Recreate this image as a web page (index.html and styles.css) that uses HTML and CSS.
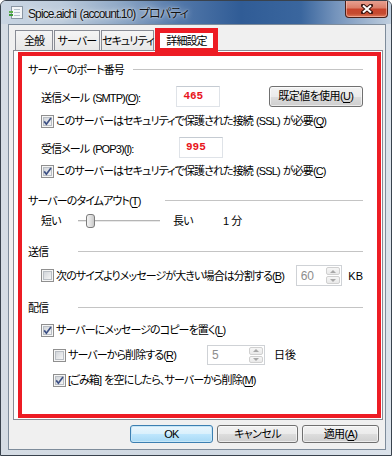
FILE: index.html
```html
<!DOCTYPE html>
<html>
<head>
    <title>Spice.aichi (account.10) プロパティ</title>
    <link rel="stylesheet" href="styles.css">
</head>
<body>
    <svg class="defs">
        <defs>
            <linearGradient id="cb-fill" x1="0" y1="0" x2="1" y2="1">
                <stop offset="0" stop-color="#cfd3d8"/>
                <stop offset="1" stop-color="#f7f7f7"/>
            </linearGradient>
            <symbol id="cb" viewBox="0 0 13 13">
                <rect x="0.5" y="0.5" width="12" height="12" fill="#f6f6f6" stroke="#8f8f8f"/>
                <rect x="2.5" y="2.5" width="8" height="8" fill="url(#cb-fill)" stroke="#b9bec4"/>
            </symbol>
            <symbol id="cb-on" viewBox="0 0 13 13">
                <use href="#cb"/>
                <path d="M3.2 6.4 L5.4 9.2 L10 3" fill="none" stroke="#3e5185" stroke-width="1.7"/>
            </symbol>
        </defs>
    </svg>

    <div class="window">
        <div class="titlebar">
            <svg class="app-icon" width="16" height="16" viewBox="0 0 16 16">
                <rect x="3.5" y="2.5" width="11" height="12" fill="#f4f6f8" stroke="#8a96a3"/>
                <line x1="6" y1="5.5" x2="12" y2="5.5" stroke="#b6c0ca"/>
                <line x1="6" y1="8.5" x2="12" y2="8.5" stroke="#b6c0ca"/>
                <line x1="6" y1="11.5" x2="12" y2="11.5" stroke="#b6c0ca"/>
                <rect x="1" y="7" width="4" height="2" fill="#5bb04a"/>
                <rect x="1" y="10" width="4" height="2" fill="#3f9a3a"/>
            </svg>
            <span class="title">Spice.aichi (account.10) プロパティ</span>
            <div class="close-btn">
                <svg width="12" height="10" viewBox="0 0 12 10">
                    <path d="M2 1.5 L10 8.5 M10 1.5 L2 8.5" stroke="#3b1510" stroke-width="4" stroke-linecap="square"/>
                    <path d="M2 1.5 L10 8.5 M10 1.5 L2 8.5" stroke="#fff" stroke-width="2"/>
                </svg>
            </div>
        </div>

        <div class="frame">
            <div class="client">
                <div class="tabs">
                    <div class="tab tab-general">全般</div>
                    <div class="tab tab-server">サーバー</div>
                    <div class="tab tab-security">セキュリティ</div>
                    <div class="tab selected">詳細設定</div>
                </div>

                <div class="panel">
                    <div class="highlight">
                        <div class="group group-ports">
                            <span class="group-label">サーバーのポート番号</span>
                            <div class="rule"></div>
                        </div>

                        <div class="row row-smtp">
                            <span class="field-label">送信メール (SMTP)(<u>O</u>):</span>
                            <div class="port">465</div>
                            <button class="btn btn-default-ports">既定値を使用(<u>U</u>)</button>
                        </div>
                        <div class="check check-ssl1">
                            <svg class="cb"><use href="#cb-on"/></svg>
                            <span>このサーバーはセキュリティで保護された接続 (SSL) が必要(<u>Q</u>)</span>
                        </div>

                        <div class="row row-pop">
                            <span class="field-label">受信メール (POP3)(<u>I</u>):</span>
                            <div class="port">995</div>
                        </div>
                        <div class="check check-ssl2">
                            <svg class="cb"><use href="#cb-on"/></svg>
                            <span>このサーバーはセキュリティで保護された接続 (SSL) が必要(<u>C</u>)</span>
                        </div>

                        <div class="group group-timeout">
                            <span class="group-label">サーバーのタイムアウト(<u>T</u>)</span>
                            <div class="rule"></div>
                        </div>
                        <div class="slider-row">
                            <span class="slider-short">短い</span>
                            <div class="track">
                                <div class="thumb"></div>
                            </div>
                            <span class="slider-long">長い</span>
                            <span>1 分</span>
                        </div>

                        <div class="group group-send">
                            <span class="group-label">送信</span>
                            <div class="rule"></div>
                        </div>
                        <div class="check check-split">
                            <svg class="cb"><use href="#cb"/></svg>
                            <span class="check-text split-text">次のサイズよりメッセージが大きい場合は分割する(<u>B</u>)</span>
                            <div class="spin spin-size">
                                <span class="spin-value">60</span>
                                <div class="spin-btns">
                                    <span class="spin-btn"><i class="arrow-up"></i></span>
                                    <span class="spin-btn"><i class="arrow-down"></i></span>
                                </div>
                            </div>
                            <span class="unit">KB</span>
                        </div>

                        <div class="group group-deliver">
                            <span class="group-label">配信</span>
                            <div class="rule"></div>
                        </div>
                        <div class="check check-copy">
                            <svg class="cb"><use href="#cb-on"/></svg>
                            <span>サーバーにメッセージのコピーを置く(<u>L</u>)</span>
                        </div>
                        <div class="check sub check-remove">
                            <svg class="cb"><use href="#cb"/></svg>
                            <span class="check-text remove-text">サーバーから削除する(<u>R</u>)</span>
                            <div class="spin spin-days">
                                <span class="spin-value">5</span>
                                <div class="spin-btns">
                                    <span class="spin-btn"><i class="arrow-up"></i></span>
                                    <span class="spin-btn"><i class="arrow-down"></i></span>
                                </div>
                            </div>
                            <span class="unit">日後</span>
                        </div>
                        <div class="check sub check-trash">
                            <svg class="cb"><use href="#cb-on"/></svg>
                            <span>[ごみ箱] を空にしたら、サーバーから削除(<u>M</u>)</span>
                        </div>
                    </div>
                </div>

                <div class="buttons">
                    <button class="btn btn-ok">OK</button>
                    <button class="btn btn-cancel">キャンセル</button>
                    <button class="btn btn-apply">適用(<u>A</u>)</button>
                </div>
            </div>
        </div>
    </div>
</body>
</html>
```

FILE: styles.css
```css
body {
    margin: 0;
    font-family: "Liberation Sans", "Noto Sans CJK JP", sans-serif;
    font-size: 11px;
    letter-spacing: -0.9px;
    word-spacing: 1px;
    font-feature-settings: "palt" 1;
    color: #000;
    background: #fff;
}

.defs {
    position: absolute;
    width: 0;
    height: 0;
}

u {
    text-decoration-thickness: 1px;
    text-underline-offset: 2px;
}

/* window frame */

.window {
    width: 392px;
    height: 456px;
    box-sizing: border-box;
    border: 1px solid #39424d;
    border-radius: 6px 6px 0 0;
    background: linear-gradient(to right, #d5dce4, #cfd8e2 50%, #dbe2ea);
    display: flex;
    flex-direction: column;
    overflow: hidden;
}

.titlebar {
    height: 23px;
    flex: none;
    display: flex;
    align-items: center;
    padding-left: 7px;
    background: linear-gradient(to right, #cad6e3 0px, #bccbdb 60px, #92abc8 115px, #5479aa 175px, #305c96 240px, #3a669e 300px, #7594bc 335px, #bfcede 390px);
}

.app-icon {
    flex: none;
    margin-top: -2px;
}

.title {
    margin-left: 4px;
    font-size: 12px;
    letter-spacing: -0.9px;
    word-spacing: 1px;
    color: #111;
    text-shadow: 0 0 6px rgba(255, 255, 255, 0.9), 0 0 2px rgba(255, 255, 255, 0.7);
    white-space: nowrap;
}

.close-btn {
    margin-left: auto;
    margin-right: 3px;
    align-self: flex-start;
    margin-top: -1px;
    width: 43px;
    height: 18px;
    box-sizing: border-box;
    border: 1px solid #4a1f18;
    border-top: none;
    border-radius: 0 0 4px 4px;
    background: linear-gradient(#e8a496 0%, #dd7f6a 45%, #c8452d 55%, #c54b30 80%, #e07b5c 100%);
    box-shadow: inset 0 0 0 1px rgba(255, 210, 200, 0.5);
    display: flex;
    align-items: center;
    justify-content: center;
}

.frame {
    flex: 1;
    padding: 0 5px 5px 7px;
    display: flex;
}

.client {
    width: 378px;
    height: 426px;
    box-sizing: border-box;
    border: 1px solid #7e8c9b;
    background: #f0f0f0;
    display: flex;
    flex-direction: column;
}

/* tabs */

.tabs {
    height: 24px;
    margin-top: 1px;
    padding-left: 6px;
    display: flex;
    align-items: flex-start;
    flex: none;
}

.tab {
    height: 20px;
    margin-top: 4px;
    margin-right: 1px;
    box-sizing: border-box;
    border: 1px solid #898c95;
    border-bottom: none;
    background: linear-gradient(#f5f5f5, #e7e7e7);
    line-height: 20px;
    text-align: center;
    white-space: nowrap;
}

.tab-general {
    width: 38px;
}

.tab-server {
    width: 46px;
}

.tab-security {
    width: 53px;
}

.tab.selected {
    position: relative;
    z-index: 1;
    width: 63px;
    height: 24px;
    margin-top: 2px;
    border: 5px solid #ed1c24;
    border-bottom-width: 4px;
    background: #fff;
    line-height: 16px;
}

/* tab page */

.panel {
    width: 370px;
    height: 370px;
    margin-left: 4px;
    box-sizing: border-box;
    border: 1px solid #898c95;
    background: #fff;
    display: flex;
    flex-direction: column;
    flex: none;
}

.highlight {
    flex: 1;
    margin: 1px 1px 1px 4px;
    border: 4px solid #ed1c24;
    padding: 0 14px 0 6px;
    display: flex;
    flex-direction: column;
}

.group {
    height: 16px;
    display: flex;
    align-items: center;
    line-height: 16px;
}

.group-label {
    flex: none;
    white-space: nowrap;
}

.rule {
    flex: 1;
    height: 0;
    border-top: 1px solid #c4c4c4;
    margin-top: -1px;
}

.group-ports {
    margin-top: 6px;
}

.group-ports .group-label {
    width: 105px;
}

.group-timeout {
    margin-top: 14px;
}

.group-timeout .group-label {
    width: 137px;
}

.group-send {
    margin-top: 15px;
}

.group-send .group-label,
.group-deliver .group-label {
    width: 50px;
}

.group-deliver {
    margin-top: 14px;
}

.row {
    height: 21px;
    display: flex;
    align-items: center;
    padding-left: 13px;
}

.row-smtp {
    margin-top: 8px;
}

.row-pop {
    margin-top: 8px;
}

.field-label {
    width: 138px;
    white-space: nowrap;
}

.port {
    width: 44px;
    height: 21px;
    box-sizing: border-box;
    border: 1px solid #dfe3e8;
    border-top-color: #c5cbd2;
    padding-left: 6px;
    font-family: "Liberation Mono", monospace;
    font-weight: bold;
    font-size: 11px;
    letter-spacing: 0;
    line-height: 19px;
    color: #e8141b;
}

.btn {
    height: 21px;
    box-sizing: border-box;
    padding: 0;
    border: 1px solid #707070;
    border-radius: 3px;
    background: linear-gradient(#f2f2f2 0%, #ebebeb 50%, #dddddd 51%, #cfcfcf 100%);
    box-shadow: inset 0 0 0 1px rgba(255, 255, 255, 0.6);
    font-family: inherit;
    font-size: 11px;
    letter-spacing: -0.6px;
    font-feature-settings: "palt" 1;
    color: #000;
    line-height: 17px;
}

.btn-default-ports {
    width: 96px;
    margin-left: 49px;
}

/* check boxes */

.check {
    height: 16px;
    display: flex;
    align-items: center;
    padding-left: 13px;
    line-height: 16px;
    white-space: nowrap;
}

.check.sub {
    padding-left: 25px;
}

.cb {
    width: 13px;
    height: 13px;
    flex: none;
    margin-right: 2px;
}

.check-ssl1 {
    margin-top: 6px;
}

.check-ssl2 {
    margin-top: 5px;
}

.check-split {
    height: 21px;
    margin-top: 5px;
}

.split-text {
    width: 242px;
}

.check-copy {
    margin-top: 6px;
}

.check-remove {
    height: 20px;
    margin-top: 7px;
}

.remove-text {
    width: 139px;
}

.check-trash {
    margin-top: 7px;
}

/* spin boxes */

.spin {
    height: 21px;
    box-sizing: border-box;
    border: 1px solid #cfd2d6;
    background: #fff;
    display: flex;
    align-items: center;
    justify-content: space-between;
    padding: 1px 1px 1px 4px;
}

.spin-size {
    width: 47px;
}

.spin-days {
    width: 58px;
    height: 20px;
}

.spin-value {
    color: #8d8d8d;
    font-size: 12px;
    letter-spacing: 0;
}

.spin-btns {
    display: flex;
    flex-direction: column;
    gap: 1px;
    height: 100%;
}

.spin-btn {
    flex: 1;
    width: 14px;
    box-sizing: border-box;
    border: 1px solid #d0d0d0;
    border-radius: 2px;
    background: linear-gradient(#f6f6f6, #e9e9e9);
    display: flex;
    align-items: center;
    justify-content: center;
}

.arrow-up {
    border-left: 3px solid transparent;
    border-right: 3px solid transparent;
    border-bottom: 3px solid #a8a8a8;
}

.arrow-down {
    border-left: 3px solid transparent;
    border-right: 3px solid transparent;
    border-top: 3px solid #a8a8a8;
}

.unit {
    margin-left: 6px;
    letter-spacing: 0;
}

.spin-days + .unit {
    margin-left: 9px;
}

/* slider */

.slider-row {
    height: 16px;
    margin-top: 4px;
    display: flex;
    align-items: center;
    padding-left: 13px;
    line-height: 16px;
}

.slider-short {
    width: 37px;
}

.track {
    position: relative;
    width: 82px;
    height: 0;
    border-top: 1px solid #b5b5b5;
    border-bottom: 1px solid #e8e8e8;
}

.thumb {
    position: absolute;
    left: 8px;
    top: -7px;
    width: 7px;
    height: 12px;
    border: 1px solid #7b7b7b;
    border-radius: 3px;
    background: linear-gradient(to right, #f4f4f4, #dcdcdc 60%, #c9c9c9);
}

.slider-long {
    width: 50px;
    margin-left: 13px;
}

/* dialog buttons */

.buttons {
    height: 18px;
    margin-top: 5px;
    padding-right: 6px;
    display: flex;
    justify-content: flex-end;
    gap: 4px;
    flex: none;
}

.buttons .btn {
    height: 18px;
    line-height: 14px;
}

.btn-ok {
    width: 83px;
    border-color: #3c7fb1;
    background: linear-gradient(#eaf6fd 0%, #d9f0fc 50%, #bee6fd 51%, #a7d9f5 100%);
    box-shadow: inset 0 0 0 1px #c6e6f7;
}

.btn-cancel {
    width: 81px;
}

.btn-apply {
    width: 77px;
}
```
